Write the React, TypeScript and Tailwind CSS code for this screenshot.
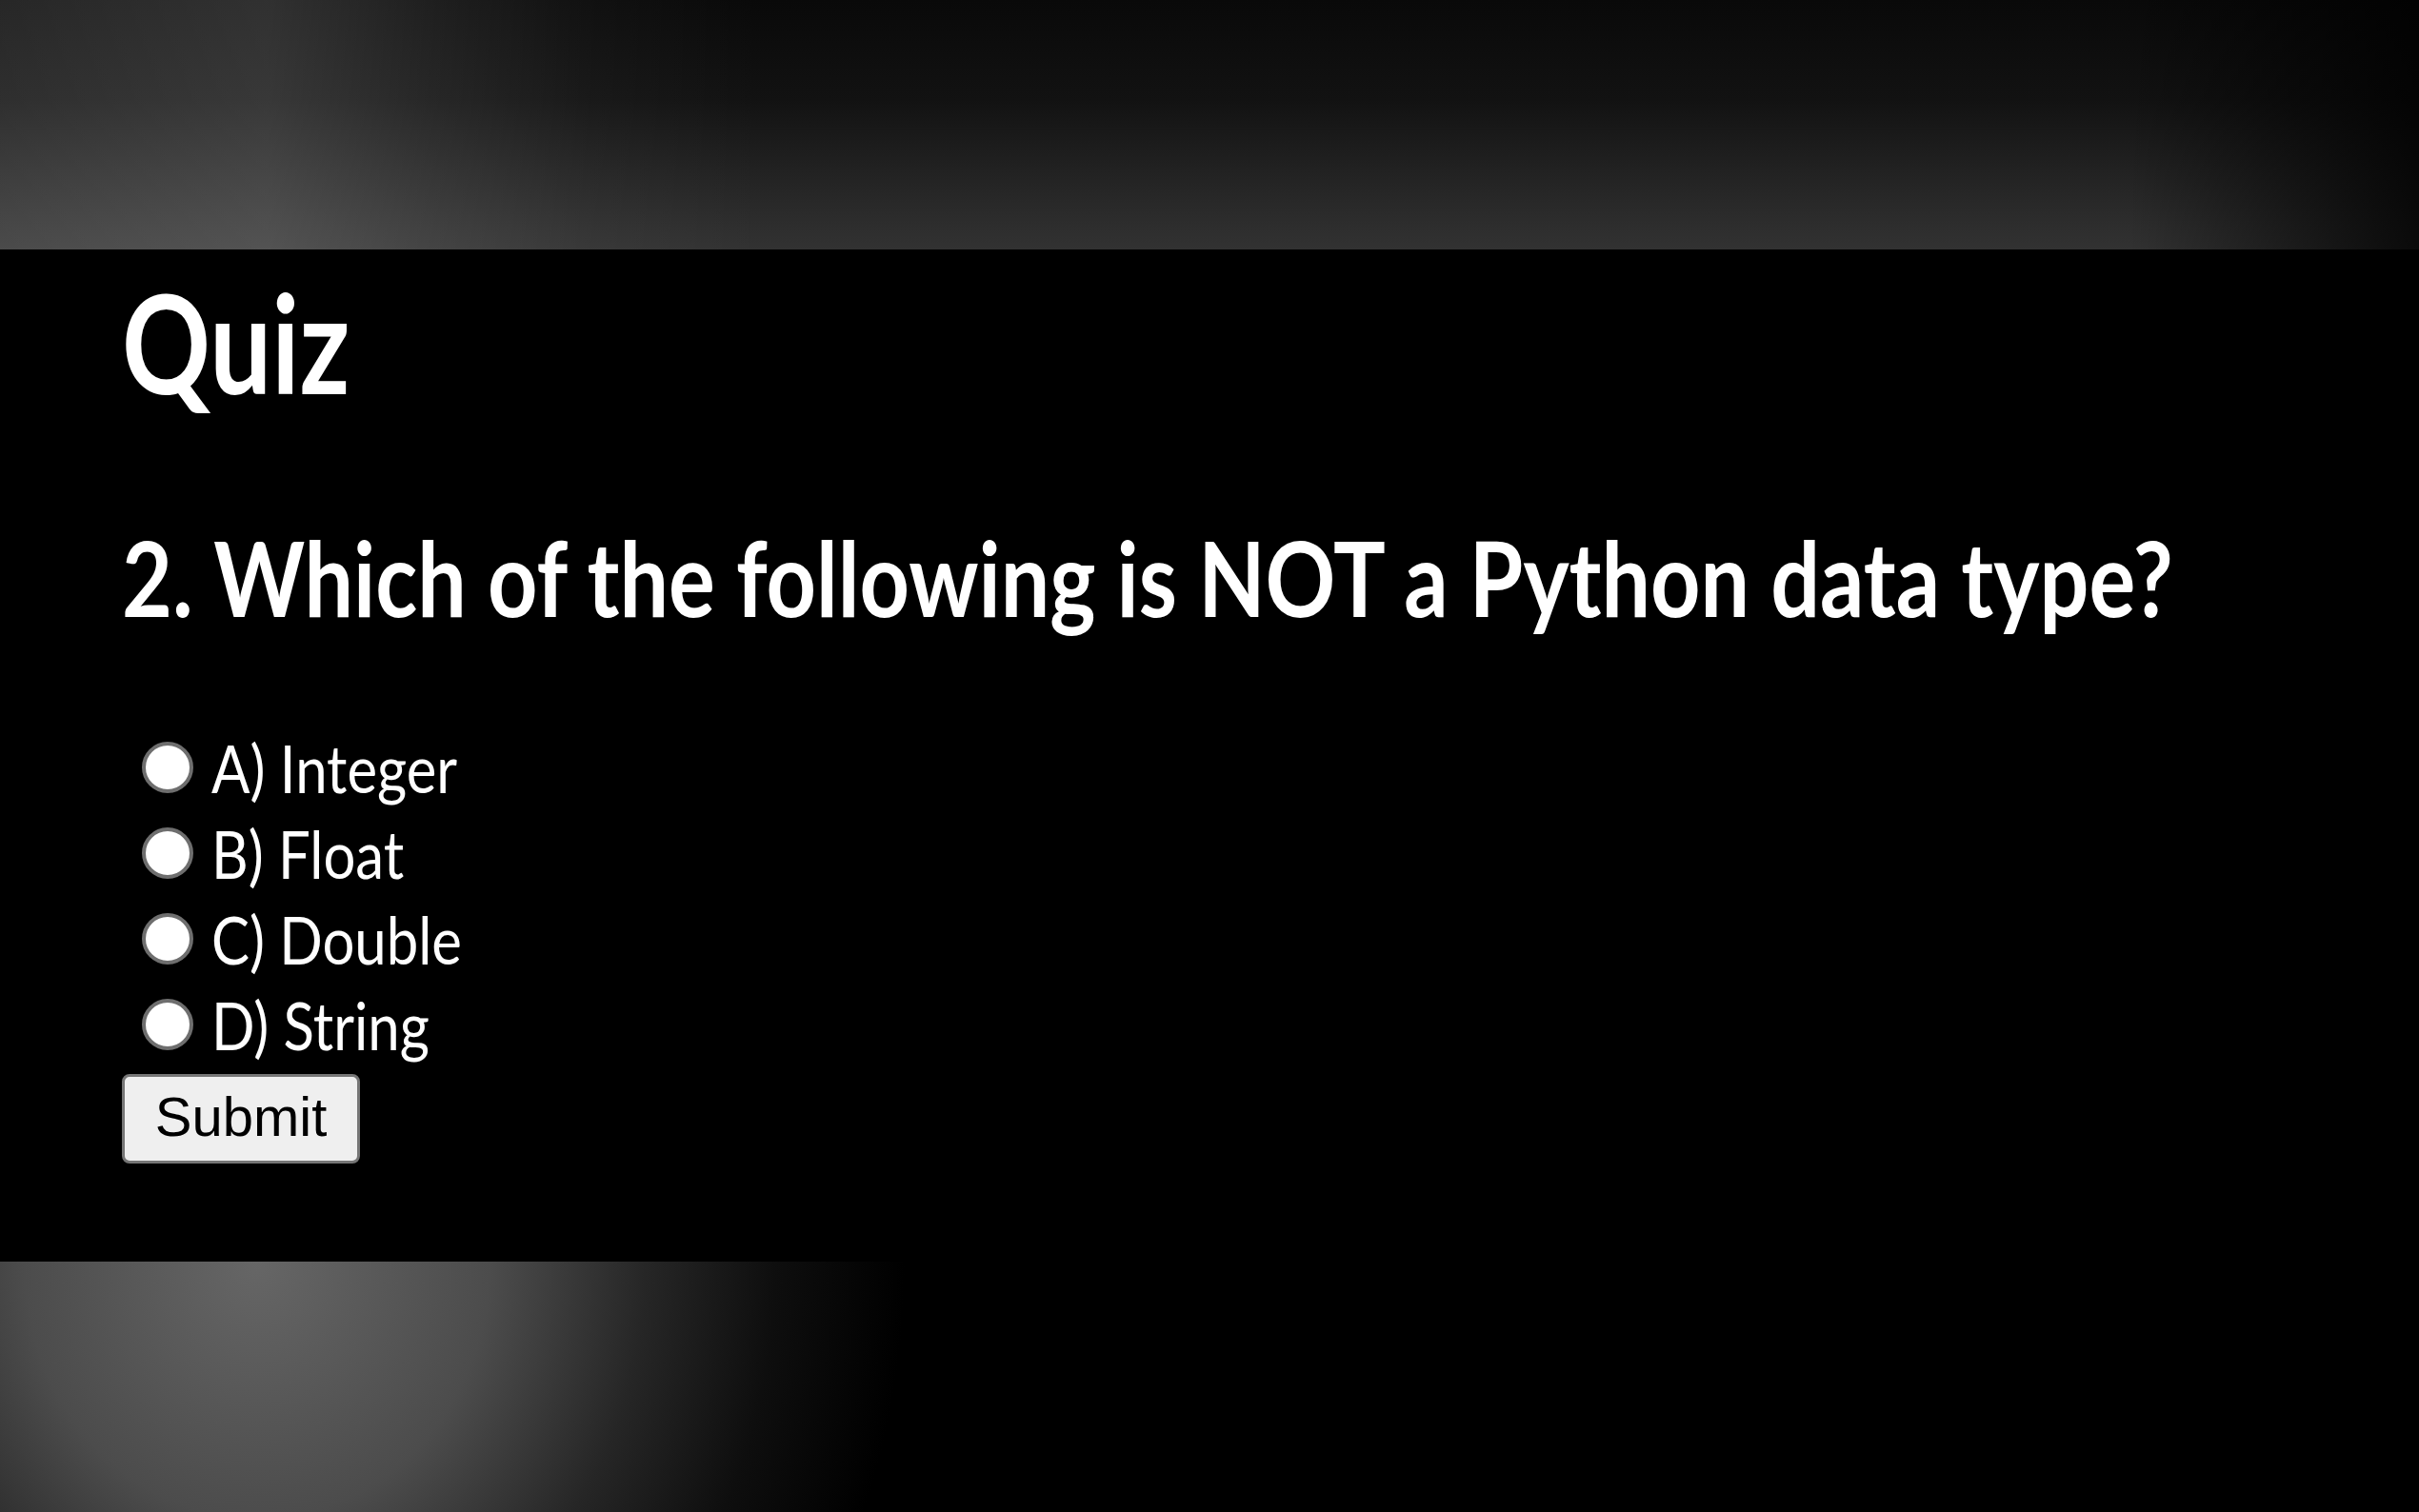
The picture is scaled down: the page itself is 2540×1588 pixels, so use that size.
import React from "react";

const options = ["A) Integer", "B) Float", "C) Double", "D) String"];

export default function App() {
  return (
    <div className="w-full h-[1588px] flex flex-col bg-black overflow-hidden font-['Lato',sans-serif]">
      <div className="h-[262px] shrink-0 bg-[linear-gradient(to_right,rgba(0,0,0,0)_88%,rgba(0,0,0,0.8)_100%),linear-gradient(to_right,rgba(255,255,255,0.12)_0px,rgba(255,255,255,0.16)_280px,rgba(255,255,255,0.09)_450px,rgba(255,255,255,0.03)_620px,rgba(255,255,255,0)_800px),linear-gradient(to_bottom,#090909_0%,#121212_40%,#282828_80%,#323232_100%)]" />
      <main className="h-[1063px] shrink-0 bg-black pl-[128px] pt-[25px] flex flex-col items-start">
        <h1 className="origin-left scale-x-[0.8] text-[144px] leading-[144px] font-bold text-white whitespace-nowrap">
          Quiz
        </h1>
        <h2 className="mt-[120px] origin-left scale-x-[0.838] text-[109px] leading-[109px] font-bold text-white whitespace-nowrap">
          2. Which of the following is NOT a Python data type?
        </h2>
        <div className="mt-[101px] flex flex-col">
          {options.map((o) => (
            <label key={o} className="h-[90px] flex items-center">
              <input
                type="radio"
                name="q"
                className="appearance-none m-0 ml-[21px] shrink-0 w-[54px] h-[54px] rounded-full bg-white border-[4px] border-[#6e6e6e]"
              />
              <span className="ml-[19px] inline-block origin-left scale-x-[0.855] text-[70px] leading-[90px] text-white whitespace-nowrap">
                {o}
              </span>
            </label>
          ))}
        </div>
        <button className="mt-[7px] w-[250px] h-[94px] flex items-center justify-center pb-[4px] bg-[#efefef] border-[3px] border-[#767676] rounded-[8px] text-black text-[58px] leading-none font-['Liberation_Sans',Arial,sans-serif]">
          Submit
        </button>
      </main>
      <div className="h-[263px] shrink-0 bg-[radial-gradient(ellipse_680px_750px_at_270px_0px,#666666_0%,#4c4c4c_36%,#262626_60%,#0e0e0e_80%,#000000_100%)]" />
    </div>
  );
}
